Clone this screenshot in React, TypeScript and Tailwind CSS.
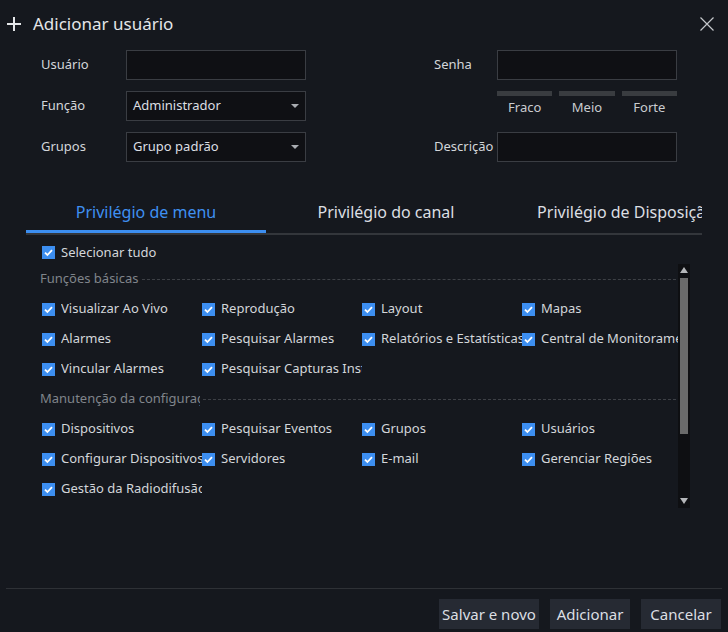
import React from "react";

const basic = [
  ["Visualizar Ao Vivo", "Reprodução", "Layout", "Mapas"],
  ["Alarmes", "Pesquisar Alarmes", "Relatórios e Estatísticas", "Central de Monitoramento"],
  ["Vincular Alarmes", "Pesquisar Capturas Instantâneas"],
];

const maintenance = [
  ["Dispositivos", "Pesquisar Eventos", "Grupos", "Usuários"],
  ["Configurar Dispositivos", "Servidores", "E-mail", "Gerenciar Regiões"],
  ["Gestão da Radiodifusão"],
];

function Check() {
  return (
    <span className="flex h-[13px] w-[13px] shrink-0 items-center justify-center bg-[#3c8ef0]">
      <svg viewBox="0 0 13 13" className="h-[13px] w-[13px]">
        <path d="M3 6.6 L5.4 9 L10 4.2" fill="none" stroke="#ffffff" strokeWidth="1.8" />
      </svg>
    </span>
  );
}

function Item({ label }: { label: string }) {
  return (
    <div className="flex w-[160px] items-center gap-[6px]">
      <Check />
      <span className="w-[141px] overflow-hidden whitespace-nowrap text-[13px] text-[#d3d6da]">{label}</span>
    </div>
  );
}

function Section({ title, rows }: { title: string; rows: string[][] }) {
  return (
    <div>
      <div className="flex h-[30px] items-center pl-[14px] pr-[2px]">
        <span className="max-w-[160px] overflow-hidden whitespace-nowrap text-[13px] text-[#80858b]">{title}</span>
        <span className="ml-[3px] flex-1 border-t border-dashed border-[#3d4046]" />
      </div>
      {rows.map((r, i) => (
        <div key={i} className="flex h-[30px] items-center pl-[16px]">
          {r.map((l) => (
            <Item key={l} label={l} />
          ))}
        </div>
      ))}
    </div>
  );
}

function Field({ label, value, select, lw }: { label: string; value?: string; select?: boolean; lw: string }) {
  return (
    <div className="flex items-center">
      <span className={`${lw} text-[13px] text-[#d3d6da]`}>{label}</span>
      <div className="flex h-[30px] w-[180px] items-center justify-between border border-[#3a3d43] bg-[#0f1014] px-[6px]">
        <span className="text-[13px] text-[#dcdfe3]">{value}</span>
        {select && (
          <svg viewBox="0 0 8 4" className="h-[4px] w-[8px]">
            <path d="M0 0 H8 L4 4 Z" fill="#a9acb1" />
          </svg>
        )}
      </div>
    </div>
  );
}

export default function App() {
  return (
    <div
      className="relative flex h-[632px] w-[728px] flex-col overflow-hidden bg-[#15181e] text-[#d3d6da]"
      style={{ fontFamily: '"Noto Sans", "Open Sans", sans-serif' }}
    >
      <div className="flex h-[50px] items-center justify-between pb-[2px] pl-[7px] pr-[14px]">
        <div className="flex items-center gap-[12px]">
          <svg viewBox="0 0 14 14" className="h-[14px] w-[14px]">
            <path d="M7 0 V14 M0 7 H14" stroke="#e4e6e9" strokeWidth="2" />
          </svg>
          <span className="text-[17px] text-[#e4e6e9]">Adicionar usuário</span>
        </div>
        <svg viewBox="0 0 14 14" className="h-[14px] w-[14px]">
          <path d="M0.5 0.5 L13.5 13.5 M13.5 0.5 L0.5 13.5" stroke="#c4c7cb" strokeWidth="1.2" />
        </svg>
      </div>

      <div className="flex pl-[41px]">
        <div className="flex flex-col gap-[11px]">
          <Field label="Usuário" lw="w-[85px]" />
          <Field label="Função" value="Administrador" select lw="w-[85px]" />
          <Field label="Grupos" value="Grupo padrão" select lw="w-[85px]" />
        </div>
        <div className="ml-[128px] flex flex-col">
          <Field label="Senha" lw="w-[63px]" />
          <div className="ml-[63px] mt-[11px] grid w-[180px] grid-cols-3 gap-[7px]">
            {["Fraco", "Meio", "Forte"].map((s) => (
              <div key={s} className="flex flex-col items-center">
                <span className="h-[5px] w-full bg-[#393c40]" />
                <span className="mt-[2px] text-[13px] leading-[18px] text-[#c9ccd0]">{s}</span>
              </div>
            ))}
          </div>
          <div className="mt-[16px]">
            <Field label="Descrição" lw="w-[63px]" />
          </div>
        </div>
      </div>

      <div className="ml-[26px] mt-[35px] flex w-[676px] overflow-hidden border-b-2 border-[#33363b]">
        <div className="flex h-[36px] w-[240px] shrink-0 items-center justify-center border-b-[3px] border-[#3c8ef0] pb-[4px] text-[16px] text-[#3f90f2]">
          Privilégio de menu
        </div>
        <div className="flex h-[36px] w-[240px] shrink-0 items-center justify-center pb-[7px] text-[16px] text-[#dcdfe3]">
          Privilégio do canal
        </div>
        <div className="flex h-[36px] w-[240px] shrink-0 items-center justify-center whitespace-nowrap pb-[7px] text-[16px] text-[#dcdfe3]">
          Privilégio de Disposição
        </div>
      </div>

      <div className="ml-[26px] flex h-[29px] items-center pl-[16px] pt-[6px]">
        <div className="flex items-center gap-[6px]">
          <Check />
          <span className="text-[13px] text-[#d3d6da]">Selecionar tudo</span>
        </div>
      </div>

      <div className="ml-[26px] flex h-[244px]">
        <div className="w-[652px] overflow-hidden">
          <Section title="Funções básicas" rows={basic} />
          <Section title="Manutenção da configuração" rows={maintenance} />
        </div>
        <div className="flex w-[12px] flex-col items-center bg-[#0e0f12]">
          <svg viewBox="0 0 8 6" className="mt-[3px] h-[6px] w-[8px]">
            <path d="M4 0 L8 6 H0 Z" fill="#b4b6b9" />
          </svg>
          <span className="mt-[5px] h-[156px] w-[8px] bg-[#6a6a6a]" />
          <span className="flex-1" />
          <svg viewBox="0 0 8 6" className="mb-[4px] h-[6px] w-[8px]">
            <path d="M0 0 H8 L4 6 Z" fill="#b4b6b9" />
          </svg>
        </div>
      </div>

      <div className="mx-[6px] mt-[80px] border-t border-[#2e3136]" />
      <div className="flex justify-end gap-[11px] pr-[7px] pt-[10px]">
        {["Salvar e novo", "Adicionar", "Cancelar"].map((b) => (
          <button
            key={b}
            className={`flex h-[30px] items-center justify-center bg-[#262a33] text-[15px] text-[#dcdfe3] ${b === "Salvar e novo" ? "w-[100px]" : "w-[80px]"}`}
          >
            {b}
          </button>
        ))}
      </div>
    </div>
  );
}
